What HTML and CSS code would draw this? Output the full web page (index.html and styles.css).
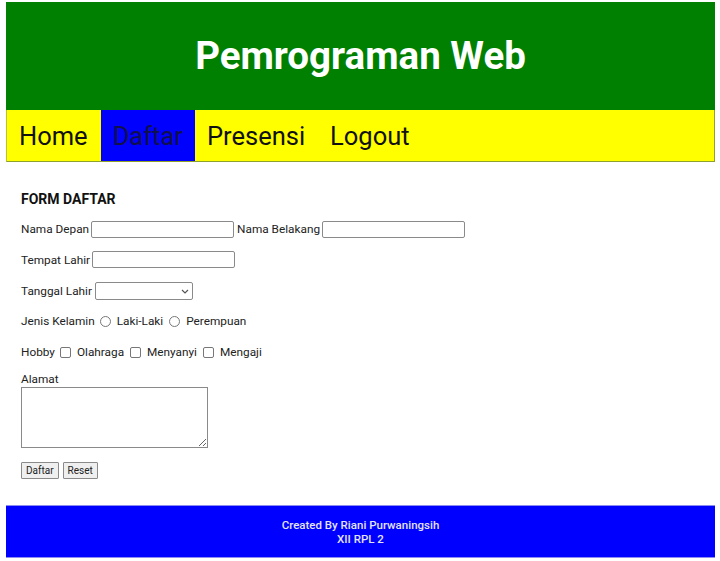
FILE: index.html
```html
<!DOCTYPE html>
<html>
<head>
<meta charset="utf-8">
<link rel="stylesheet" href="styles.css">
</head>
<body>
<div class="page">
  <header class="header">
    <h1 class="title">Pemrograman Web</h1>
  </header>
  <nav class="nav">
    <a class="nav-item">Home</a>
    <a class="nav-item active">Daftar</a>
    <a class="nav-item">Presensi</a>
    <a class="nav-item">Logout</a>
  </nav>
  <main class="content">
    <h2 class="form-title">FORM DAFTAR</h2>
    <form class="form">
      <div class="row">
        <label>Nama Depan</label><input class="text" type="text">
        <label class="gap">Nama Belakang</label><input class="text" type="text">
      </div>
      <div class="row">
        <label>Tempat Lahir</label><input class="text" type="text">
      </div>
      <div class="row">
        <label>Tanggal Lahir</label>
        <span class="select-wrap">
          <select class="select"><option></option></select>
          <svg class="chevron" width="8" height="5" viewBox="0 0 8 5"><path d="M1 1 L4 4 L7 1" fill="none" stroke="#555" stroke-width="1.2"/></svg>
        </span>
      </div>
      <div class="row">
        <label>Jenis Kelamin</label>
        <span class="radio"></span><label class="opt">Laki-Laki</label>
        <span class="radio"></span><label class="opt">Perempuan</label>
      </div>
      <div class="row">
        <label>Hobby</label>
        <span class="check"></span><label class="opt">Olahraga</label>
        <span class="check"></span><label class="opt">Menyanyi</label>
        <span class="check"></span><label class="opt">Mengaji</label>
      </div>
      <div class="area-block">
        <label>Alamat</label>
        <textarea class="area"></textarea>
      </div>
      <div class="buttons">
        <button type="button" class="btn">Daftar</button>
        <button type="button" class="btn">Reset</button>
      </div>
    </form>
  </main>
  <footer class="footer">
    <div>Created By Riani Purwaningsih</div>
    <div>XII RPL 2</div>
  </footer>
</div>
</body>
</html>
```
FILE: styles.css
```css
html, body {
  margin: 0;
  padding: 0;
  background: #ffffff;
}
body {
  padding: 2px 5px 0 6px;
  font-family: Roboto, "Liberation Sans", sans-serif;
}
.page {
  display: flex;
  flex-direction: column;
}
.header {
  background: #008000;
  height: 108px;
  display: flex;
  align-items: center;
  justify-content: center;
}
.title {
  margin: 0;
  color: #ffffff;
  font-size: 38.5px;
  font-weight: 700;
  padding-bottom: 1px;
}
.nav {
  background: #ffff00;
  height: 51px;
  border: 1px solid #8fa12a;
  border-top: none;
  border-left-color: #b9c23a;
  display: flex;
  align-items: stretch;
}
.nav-item {
  display: flex;
  align-items: center;
  padding: 0 12px 0 12px;
  font-size: 25.5px;
  color: #111111;
}
.nav-item:first-child {
  padding-left: 12px;
  padding-right: 13px;
}
.nav-item.active {
  background: #0000ff;
  color: #10104a;
}
.nav-item:nth-child(3) {
  padding-right: 13px;
}
.content {
  height: 343px;
  padding: 0 15px;
  color: #222222;
}
.form-title {
  margin: 29px 0 13px 0;
  font-size: 14px;
  font-weight: 700;
  color: #111111;
}
.form {
  display: flex;
  flex-direction: column;
  font-size: 11.8px;
}
.row {
  display: flex;
  align-items: center;
  height: 18px;
  margin-bottom: 12.75px;
  white-space: nowrap;
}
.row label {
  margin-right: 2px;
}
.row label.opt {
  margin-right: 3px;
}
.gap {
  margin-left: 1px;
}
.text {
  box-sizing: border-box;
  width: 143px;
  height: 17px;
  border: 1px solid #8a8a8a;
  border-radius: 2px;
  padding: 0;
  margin: 0 2px 0 0;
  background: #fff;
}
.select-wrap {
  position: relative;
  display: inline-flex;
  margin-left: 1px;
}
.select {
  box-sizing: border-box;
  width: 98px;
  height: 18px;
  border: 1px solid #8a8a8a;
  border-radius: 2px;
  background: #fff;
  font-size: 11px;
  appearance: none;
  -webkit-appearance: none;
  margin: 0;
}
.chevron {
  position: absolute;
  right: 4px;
  top: 7px;
}
.radio {
  display: inline-block;
  box-sizing: border-box;
  width: 11px;
  height: 11px;
  border: 1px solid #777;
  border-radius: 50%;
  margin: 0 6px 0 3px;
}
.check {
  display: inline-block;
  box-sizing: border-box;
  width: 11px;
  height: 11px;
  border: 1px solid #777;
  border-radius: 2px;
  margin: 0 6px 0 3px;
}
.area-block {
  display: flex;
  flex-direction: column;
  align-items: flex-start;
  margin-top: -2px;
}
.area {
  box-sizing: border-box;
  width: 187px;
  height: 61px;
  border: 1px solid #8a8a8a;
  margin: 1px 0 0 0;
  resize: vertical;
}
.buttons {
  display: flex;
  gap: 4px;
  margin-top: 14px;
}
.btn {
  box-sizing: border-box;
  height: 17px;
  padding: 0 4px;
  font-family: Roboto, "Liberation Sans", sans-serif;
  font-size: 10px;
  color: #222;
  background: #efefef;
  border: 1px solid #8a8a8a;
  border-radius: 1px;
}
.footer {
  background: #0000ff;
  height: 51px;
  border-top: 1px solid #8c8cf0;
  border-bottom: 1px solid #8c8cf0;
  display: flex;
  flex-direction: column;
  align-items: center;
  justify-content: center;
  color: #e4e4f8;
  font-size: 11.5px;
  font-weight: 500;
  line-height: 14px;
}
```
